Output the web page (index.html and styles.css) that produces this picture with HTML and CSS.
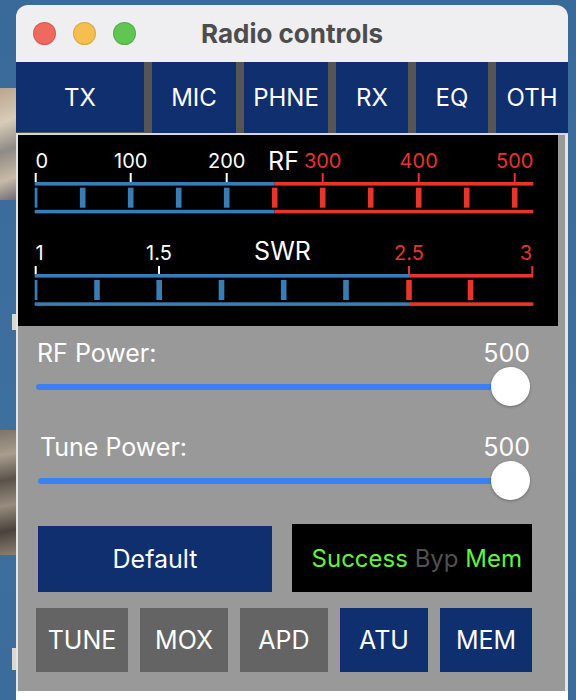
FILE: index.html
```html
<!DOCTYPE html>
<html lang="en">
<head>
  <meta charset="UTF-8" />
  <meta name="viewport" content="width=device-width, initial-scale=1.0"/>
  <title>Radio controls</title>
  <link rel="stylesheet" href="styles.css">
</head>
<body>

<!-- desktop behind the window -->
<div class="desk">
  <div class="desk-photo"></div>
  <div class="desk-tab"></div>
  <div class="desk-fur"></div>
  <div class="desk-tab desk-tab-low"></div>
</div>

<div class="window">
  <header class="titlebar">
    <div class="lights">
      <span class="light red"></span>
      <span class="light yellow"></span>
      <span class="light green"></span>
    </div>
    <div class="title">Radio controls</div>
    <div></div>
  </header>

  <nav class="tabs">
    <button class="tab tab-tx active">TX</button>
    <button class="tab tab-mic">MIC</button>
    <button class="tab tab-phne">PHNE</button>
    <button class="tab tab-rx">RX</button>
    <button class="tab tab-eq">EQ</button>
    <button class="tab tab-oth">OTH</button>
  </nav>

  <main class="panel">
    <!-- RF / SWR meter -->
    <svg class="meter" width="540" height="191" viewBox="0 0 540 191">
      <!-- RF scale -->
      <text x="17.5" y="33">0</text>
      <text x="112.7" y="33" text-anchor="middle">100</text>
      <text x="208.7" y="33" text-anchor="middle">200</text>
      <text x="265.5" y="35" text-anchor="middle" class="name">RF</text>
      <text x="304.7" y="33" text-anchor="middle" class="hot">300</text>
      <text x="400.7" y="33" text-anchor="middle" class="hot">400</text>
      <text x="496.7" y="33" text-anchor="middle" class="hot">500</text>

      <rect class="mark" x="16.7" y="38" width="2" height="9"/>
      <rect class="mark" x="111.7" y="38" width="2" height="9"/>
      <rect class="mark" x="207.7" y="38" width="2" height="9"/>
      <rect class="red" x="303.7" y="38" width="2" height="9"/>
      <rect class="red" x="399.7" y="38" width="2" height="9"/>
      <rect class="red" x="495.7" y="38" width="2" height="9"/>

      <rect class="blue" x="16.7" y="47" width="240" height="3.6"/>
      <rect class="red" x="256.7" y="47" width="258.6" height="3.6"/>

      <rect class="blue" x="16.7" y="52.7" width="2.7" height="20"/>
      <rect class="blue" x="61.9" y="52.7" width="5.6" height="20"/>
      <rect class="blue" x="109.9" y="52.7" width="5.6" height="20"/>
      <rect class="blue" x="157.9" y="52.7" width="5.6" height="20"/>
      <rect class="blue" x="205.9" y="52.7" width="5.6" height="20"/>
      <rect class="red" x="253.9" y="52.7" width="5.6" height="20"/>
      <rect class="red" x="301.9" y="52.7" width="5.6" height="20"/>
      <rect class="red" x="349.9" y="52.7" width="5.6" height="20"/>
      <rect class="red" x="397.9" y="52.7" width="5.6" height="20"/>
      <rect class="red" x="445.9" y="52.7" width="5.6" height="20"/>
      <rect class="red" x="493.9" y="52.7" width="5.6" height="20"/>

      <rect class="blue" x="16.7" y="74.8" width="240" height="3.6"/>
      <rect class="red" x="256.7" y="74.8" width="258.6" height="3.6"/>

      <!-- SWR scale -->
      <text x="17.5" y="125">1</text>
      <text x="141" y="125" text-anchor="middle">1.5</text>
      <text x="264.5" y="125" text-anchor="middle" class="name">SWR</text>
      <text x="391" y="125" text-anchor="middle" class="hot">2.5</text>
      <text x="514" y="125" text-anchor="end" class="hot">3</text>

      <rect class="mark" x="16.7" y="131" width="2" height="8"/>
      <rect class="mark" x="140" y="131" width="2" height="8"/>
      <rect class="red" x="390" y="131" width="2" height="8"/>
      <rect class="red" x="513.3" y="131" width="2" height="8"/>

      <rect class="blue" x="16.7" y="139" width="374.3" height="3.6"/>
      <rect class="red" x="391" y="139" width="124.3" height="3.6"/>

      <rect class="blue" x="16.7" y="145" width="2.7" height="20"/>
      <rect class="blue" x="76.2" y="145" width="5.6" height="20"/>
      <rect class="blue" x="138.4" y="145" width="5.6" height="20"/>
      <rect class="blue" x="200.7" y="145" width="5.6" height="20"/>
      <rect class="blue" x="262.9" y="145" width="5.6" height="20"/>
      <rect class="blue" x="325.2" y="145" width="5.6" height="20"/>
      <rect class="red" x="388.2" y="145" width="5.6" height="20"/>
      <rect class="red" x="449.7" y="145" width="5.6" height="20"/>

      <rect class="blue" x="16.7" y="167.3" width="374.3" height="3.6"/>
      <rect class="red" x="391" y="167.3" width="124.3" height="3.6"/>
    </svg>

    <div class="control control-rf">
      <div class="control-head">
        <span>RF Power:</span>
        <span>500</span>
      </div>
      <input class="slider" type="range" min="0" max="500" value="500">
    </div>

    <div class="control control-tune">
      <div class="control-head">
        <span>Tune Power:</span>
        <span>500</span>
      </div>
      <input class="slider" type="range" min="0" max="500" value="500">
    </div>

    <div class="action-row">
      <button class="default-btn">Default</button>
      <div class="status">
        <span class="on">Success</span>&nbsp;<span class="off">Byp</span>&nbsp;<span class="on">Mem</span>
      </div>
    </div>

    <div class="key-row">
      <button class="key key-wide">TUNE</button>
      <button class="key">MOX</button>
      <button class="key">APD</button>
      <button class="key key-on">ATU</button>
      <button class="key key-on key-wide">MEM</button>
    </div>
  </main>

  <div class="footer"></div>
</div>

</body>
</html>
```

FILE: styles.css
```css
body {
  font-family: Inter, "Noto Sans", sans-serif;
  background: linear-gradient(180deg, #3a6a99 0%, #3d6f9f 60%, #3b6c9c 100%);
  margin: 0;
  height: 700px;
  overflow: hidden;
  display: flex;
  align-items: flex-start;
}

/* desktop scraps at the left edge */
.desk {
  width: 16px;
  flex: none;
  display: flex;
  flex-direction: column;
  align-items: flex-end;
}
.desk-photo {
  width: 16px;
  height: 112px;
  margin-top: 88px;
  background: linear-gradient(160deg, #b9a58c 0%, #d9ccb8 30%, #8f8a86 55%, #c8bba6 80%, #6f6a78 100%);
}
.desk-tab {
  width: 4px;
  height: 16px;
  margin-top: 114px;
  background: #d8d8d8;
}
.desk-fur {
  width: 16px;
  height: 125px;
  margin-top: 100px;
  background: linear-gradient(170deg, #7d7468 0%, #a89d8e 20%, #5a524a 40%, #978c7d 60%, #4a433c 80%, #8a8072 100%);
}
.desk-tab-low {
  margin-top: 93px;
  height: 22px;
}

.window {
  width: 552px;
  height: 695px;
  margin-top: 5px;
  border-radius: 12px 12px 0 0;
  overflow: hidden;
  background: #efeff1;
  display: flex;
  flex-direction: column;
}

.titlebar {
  height: 57px;
  flex: none;
  display: grid;
  grid-template-columns: 1fr auto 1fr;
  align-items: center;
}
.lights {
  display: flex;
  gap: 17px;
  padding-left: 17px;
}
.light {
  width: 21px;
  height: 21px;
  border-radius: 50%;
  border: 1px solid rgba(0,0,0,0.12);
}
.red { background: #ee6a5f; }
.yellow { background: #f5bf4f; }
.green { background: #61c554; }
.title {
  font-size: 26px;
  font-weight: 700;
  color: #4d4d4d;
}

.tabs {
  height: 71px;
  flex: none;
  display: flex;
  gap: 8px;
  background: #555;
}
.tab {
  border: none;
  margin: 0;
  padding: 0;
  background: #102f6e;
  color: #fff;
  font-family: inherit;
  font-size: 24px;
  height: 71px;
}
.tab.active {
  height: 70px;
}
.tab-tx { width: 128px; }
.tab-mic { width: 84px; }
.tab-phne { width: 84px; }
.tab-rx { width: 72px; }
.tab-eq { width: 72px; }
.tab-oth { width: 72px; }

.panel {
  flex: none;
  background: #999;
  border-top: 2px solid #d6d6d6;
  border-left: 2px solid #e4e4e4;
  border-right: 3px solid #e4e4e4;
  padding-bottom: 19px;
  display: flex;
  flex-direction: column;
}

.meter {
  display: block;
  background: #000;
}
.meter text {
  font-family: Inter, sans-serif;
  font-size: 20px;
  fill: #fff;
}
.meter text.hot { fill: #e8342a; }
.meter text.name { font-size: 25px; }
.meter .mark { fill: #fff; }
.meter .blue { fill: #3a7db6; }
.meter .red { fill: #e8342a; }

.control {
  display: flex;
  flex-direction: column;
}
.control-rf {
  margin: 13px 0 0 18px;
  width: 494px;
}
.control-tune {
  margin: 27px 0 0 20px;
  width: 492px;
}
.control-head {
  display: flex;
  justify-content: space-between;
  font-size: 25px;
  line-height: 28px;
  color: #fff;
}
.control-rf .control-head { padding-left: 1px; }
.control-tune .control-head { padding-left: 2px; }

.slider {
  -webkit-appearance: none;
  appearance: none;
  width: 100%;
  height: 39px;
  margin: 0;
  background: transparent;
  display: block;
}
.slider::-webkit-slider-runnable-track {
  height: 6px;
  border-radius: 3px;
  background: #3a81f1;
}
.slider::-webkit-slider-thumb {
  -webkit-appearance: none;
  width: 39px;
  height: 39px;
  margin-top: -16.5px;
  border-radius: 50%;
  background: #fff;
  box-shadow: 0 1px 3px rgba(0,0,0,0.3);
}

.action-row {
  display: flex;
  align-items: flex-start;
  gap: 20px;
  margin: 24px 0 0 20px;
}
.default-btn {
  width: 234px;
  height: 66px;
  margin-top: 2px;
  border: none;
  background: #102f6e;
  color: #fff;
  font-family: inherit;
  font-size: 25px;
}
.status {
  width: 240px;
  height: 68px;
  box-sizing: border-box;
  background: #000;
  display: flex;
  align-items: center;
  justify-content: flex-end;
  padding-right: 10px;
  font-size: 24px;
}
.status .on { color: #63f23f; }
.status .off { color: #505050; }

.key-row {
  display: flex;
  gap: 12px;
  margin: 16px 0 0 18px;
}
.key {
  width: 88px;
  height: 64px;
  border: none;
  background: #646464;
  color: #fff;
  font-family: inherit;
  font-size: 25px;
  padding: 0;
}
.key-wide { width: 92px; }
.key-on { background: #102f6e; }

.footer {
  flex: 1;
  background: #fff;
}
```
